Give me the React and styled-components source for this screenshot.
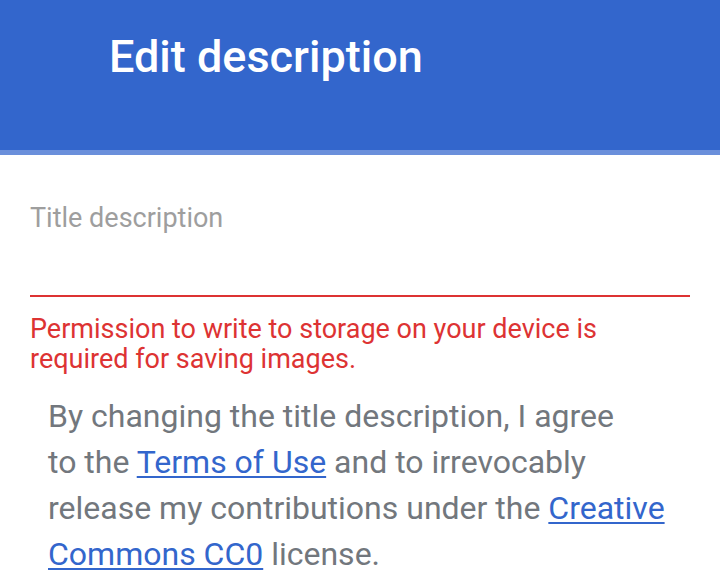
import React from "react";
import styled, { createGlobalStyle } from "styled-components";

const Global = createGlobalStyle`
  html, body { margin: 0; padding: 0; background: #fff; }
  body { font-family: Roboto, "Noto Sans", sans-serif; -webkit-font-smoothing: antialiased; }
`;

const Header = styled.header`
  background: #3366cc;
  height: 155px;
  box-sizing: border-box;
  padding: 34px 0 0 109px;
  border-bottom: 5px solid #6a8fdb;
`;

const Title = styled.h1`
  margin: 0;
  color: #fff;
  font-size: 45px;
  line-height: 45px;
  font-weight: 500;
`;

const Form = styled.section`
  padding: 50px 30px 0;
`;

const Label = styled.label`
  display: block;
  color: #9e9e9e;
  font-size: 27px;
  line-height: 27px;
`;

const Input = styled.input`
  display: block;
  width: 100%;
  box-sizing: border-box;
  height: 65px;
  border: none;
  border-bottom: 2px solid #dd3333;
  background: transparent;
  outline: none;
  font: inherit;
  padding: 0;
`;

const ErrorText = styled.p`
  margin: 17px 0 0;
  color: #dd3333;
  font-size: 27px;
  line-height: 30px;
`;

const Notice = styled.p`
  margin: 19px 0 0;
  padding: 0 40px 0 48px;
  color: #72777d;
  font-size: 32px;
  line-height: 46px;
`;

const Link = styled.a`
  color: #3366cc;
  text-decoration: underline;
  text-underline-offset: 3px;
  text-decoration-thickness: 2px;
`;

export default function App() {
  return (
    <>
      <Global />
      <Header>
        <Title>Edit description</Title>
      </Header>
      <Form>
        <Label htmlFor="title-desc">Title description</Label>
        <Input id="title-desc" />
        <ErrorText>
          Permission to write to storage on your device is required for saving images.
        </ErrorText>
      </Form>
      <Notice>
        By changing the title description, I agree
        <br />
        to the <Link href="#">Terms of Use</Link> and to irrevocably release my contributions
        under the <Link href="#">Creative Commons CC0</Link> license.
      </Notice>
    </>
  );
}
